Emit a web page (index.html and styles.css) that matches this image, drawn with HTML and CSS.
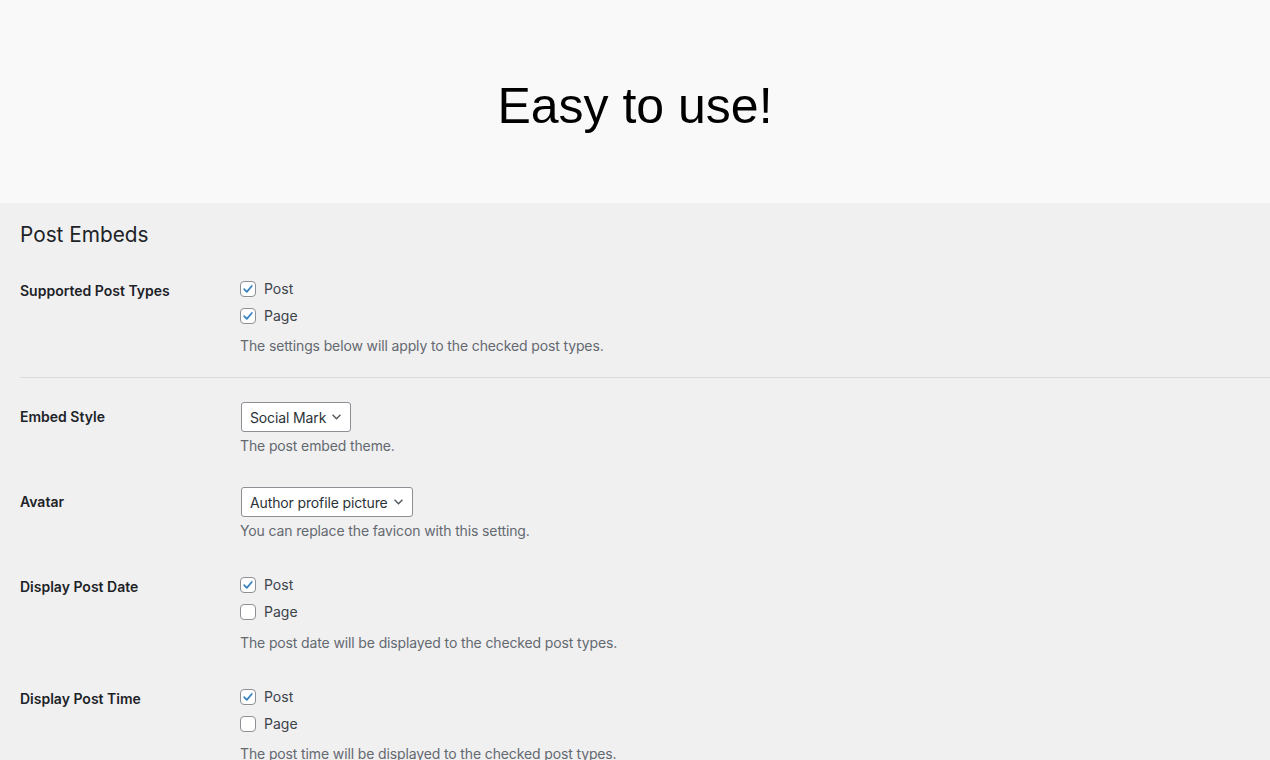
FILE: index.html
```html
<!DOCTYPE html>
<html lang="en">
<head>
    <meta charset="UTF-8">
    <meta name="viewport" content="width=device-width, initial-scale=1.0">
    <title>Post Embeds</title>
    <link rel="stylesheet" href="styles.css">
</head>
<body>
    <header class="hero">
        <h1>Easy to use!</h1>
    </header>

    <main class="settings">
        <h2>Post Embeds</h2>

        <div class="group group-first">
            <div class="row">
                <div class="row-label">Supported Post Types</div>
                <div class="row-field">
                    <div class="options">
                        <label class="option"><span class="checkbox checked"><svg viewBox="0 0 16 16"><path d="M3.6 8.2 6.6 11.2 12.4 4.6"/></svg></span>Post</label>
                        <label class="option"><span class="checkbox checked"><svg viewBox="0 0 16 16"><path d="M3.6 8.2 6.6 11.2 12.4 4.6"/></svg></span>Page</label>
                    </div>
                    <p class="description">The settings below will apply to the checked post types.</p>
                </div>
            </div>
        </div>

        <div class="group">
            <div class="row">
                <div class="row-label">Embed Style</div>
                <div class="row-field">
                    <div class="select">Social Mark<svg viewBox="0 0 8 5"><path d="M0.5 0.5 4 4 7.5 0.5"/></svg></div>
                    <p class="description desc-select">The post embed theme.</p>
                </div>
            </div>

            <div class="row">
                <div class="row-label">Avatar</div>
                <div class="row-field">
                    <div class="select">Author profile picture<svg viewBox="0 0 8 5"><path d="M0.5 0.5 4 4 7.5 0.5"/></svg></div>
                    <p class="description desc-select">You can replace the favicon with this setting.</p>
                </div>
            </div>

            <div class="row">
                <div class="row-label">Display Post Date</div>
                <div class="row-field">
                    <div class="options">
                        <label class="option"><span class="checkbox checked"><svg viewBox="0 0 16 16"><path d="M3.6 8.2 6.6 11.2 12.4 4.6"/></svg></span>Post</label>
                        <label class="option"><span class="checkbox"></span>Page</label>
                    </div>
                    <p class="description desc-wide">The post date will be displayed to the checked post types.</p>
                </div>
            </div>

            <div class="row">
                <div class="row-label">Display Post Time</div>
                <div class="row-field">
                    <div class="options">
                        <label class="option"><span class="checkbox checked"><svg viewBox="0 0 16 16"><path d="M3.6 8.2 6.6 11.2 12.4 4.6"/></svg></span>Post</label>
                        <label class="option"><span class="checkbox"></span>Page</label>
                    </div>
                    <p class="description">The post time will be displayed to the checked post types.</p>
                </div>
            </div>
        </div>
    </main>
</body>
</html>
```

FILE: styles.css
```css
body {
    margin: 0;
    background-color: #f0f0f1;
    font-family: Inter, Roboto, "Liberation Sans", sans-serif;
    font-size: 14px;
    color: #3c434a;
}
.hero {
    background-color: #f9f9f9;
    height: 203px;
    display: flex;
    align-items: center;
    justify-content: center;
}
.hero h1 {
    margin: 0;
    font-family: "Liberation Sans", Arial, sans-serif;
    font-size: 50px;
    font-weight: normal;
    color: #000;
    line-height: 1;
    padding-top: 8px;
}
.settings {
    padding-left: 20px;
}
.settings h2 {
    margin: 0;
    padding-top: 18px;
    font-size: 20.8px;
    font-weight: 400;
    line-height: 27px;
    color: #1d2327;
}
.group-first {
    margin-top: 13px;
    padding-bottom: 5px;
    border-bottom: 1px solid #dcdcde;
}
.group + .group {
    padding-top: 9px;
}
.row {
    display: flex;
    padding: 15px 0 16px;
}
.row-label {
    width: 220px;
    flex-shrink: 0;
    font-weight: 600;
    color: #1d2327;
    line-height: 20px;
    padding-top: 5px;
}
.options {
    display: flex;
    flex-direction: column;
    gap: 7px;
    padding-top: 3px;
}
.option {
    display: flex;
    align-items: center;
    gap: 8px;
    line-height: 20px;
    color: #3c434a;
}
.checkbox {
    width: 16px;
    height: 16px;
    box-sizing: border-box;
    border: 1px solid #8c8f94;
    border-radius: 4px;
    background-color: #fff;
    display: flex;
    align-items: center;
    justify-content: center;
}
.checkbox svg {
    width: 14px;
    height: 14px;
    fill: none;
    stroke: #3582c4;
    stroke-width: 2;
    stroke-linecap: round;
    stroke-linejoin: round;
}
.description {
    margin: 10px 0 0;
    line-height: 20px;
    color: #646970;
    letter-spacing: -0.13px;
}
.description.desc-wide {
    margin-top: 11px;
}
.description.desc-select {
    margin-top: 4px;
}
.select {
    display: inline-flex;
    align-items: center;
    gap: 6px;
    height: 30px;
    box-sizing: border-box;
    margin-left: 1px;
    padding: 0 9px 0 8px;
    border: 1px solid #8c8f94;
    border-radius: 3px;
    background-color: #fff;
    color: #2c3338;
    letter-spacing: -0.13px;
}
.select svg {
    width: 9px;
    height: 6px;
    fill: none;
    stroke: #50575e;
    stroke-width: 1.2;
}
```
